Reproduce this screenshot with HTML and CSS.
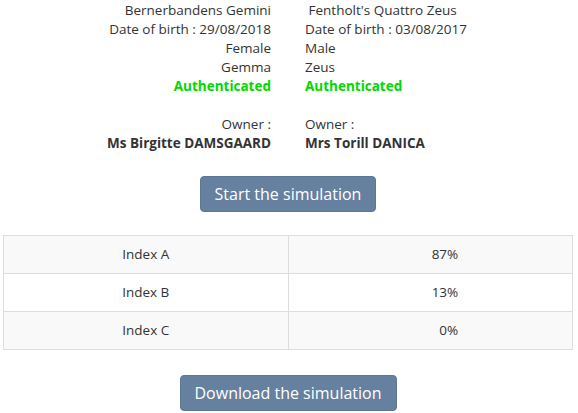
FILE: index.html
```html
<!doctype html>
<html lang="en">
  <head>
    <meta charset="UTF-8" />
    <meta name="viewport" content="width=device-width, initial-scale=1.0" />
    <title>Simulation</title>
    <link rel="stylesheet" href="styles.css">
  </head>
  <body>
    <!-- The two dogs side by side -->
    <div class="pair">
      <div class="dog dog-left">
        <div>Bernerbandens Gemini</div>
        <div>Date of birth : 29/08/2018</div>
        <div>Female</div>
        <div>Gemma</div>
        <div class="status">Authenticated</div>
        <div class="spacer"></div>
        <div>Owner :</div>
        <div class="owner">Ms Birgitte DAMSGAARD</div>
      </div>
      <div class="dog dog-right">
        <div>&nbsp;Fentholt's Quattro Zeus</div>
        <div>Date of birth : 03/08/2017</div>
        <div>Male</div>
        <div>Zeus</div>
        <div class="status">Authenticated</div>
        <div class="spacer"></div>
        <div>Owner :</div>
        <div class="owner">Mrs Torill DANICA</div>
      </div>
    </div>

    <div class="actions">
      <button type="button" class="btn">Start the simulation</button>
    </div>

    <table class="results">
      <tr>
        <td>Index A</td>
        <td><span class="value">87%</span></td>
      </tr>
      <tr>
        <td>Index B</td>
        <td><span class="value">13%</span></td>
      </tr>
      <tr>
        <td>Index C</td>
        <td><span class="value">0%</span></td>
      </tr>
    </table>

    <div class="actions actions-bottom">
      <button type="button" class="btn">Download the simulation</button>
    </div>
  </body>
</html>
```

FILE: styles.css
```css
* {
  margin: 0;
  padding: 0;
  box-sizing: border-box;
}

body {
  font-family: "Open Sans", "Liberation Sans", sans-serif;
  font-size: 13.5px;
  line-height: 19px;
  color: #333;
  background: #fff;
  padding: 0 5px 0 3px;
}

/* Dog details */
.pair {
  display: flex;
  padding-top: 1px;
}

.dog {
  flex: 1;
  padding: 0 17px;
}

.dog-left {
  text-align: right;
}

.dog-right {
  text-align: left;
}

.status {
  color: #00d800;
  font-weight: bold;
}

.spacer {
  height: 19px;
}

.owner {
  font-weight: bold;
}

/* Buttons */
.actions {
  display: flex;
  justify-content: center;
  padding: 23px 0 23px;
}

.actions-bottom {
  padding: 25px 0 0;
}

.btn {
  font-family: "Open Sans", "Liberation Sans", sans-serif;
  font-size: 16px;
  line-height: 22px;
  color: #fff;
  background-color: #66809f;
  border: 1px solid #5e7796;
  border-radius: 4px;
  padding: 6px 14px;
  cursor: pointer;
}

.btn:hover {
  background-color: #566e8c;
}

/* Results table */
.results {
  width: 570px;
  border-collapse: collapse;
}

.results td {
  width: 50%;
  height: 38px;
  border: 1px solid #ddd;
  text-align: center;
  vertical-align: middle;
  padding: 0 8px;
}

.results tr:nth-child(odd) td {
  background-color: #f9f9f9;
}

.results .value {
  display: inline-block;
  width: 56px;
  text-align: right;
}
```
